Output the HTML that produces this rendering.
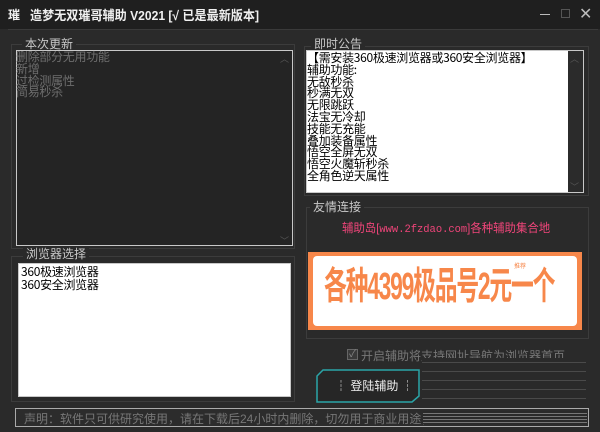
<!DOCTYPE html>
<html><head><meta charset="utf-8"><style>
*{margin:0;padding:0;box-sizing:border-box}
body{width:600px;height:432px;background:#2a2a2a;overflow:hidden;position:relative;font-family:"Liberation Sans","Noto Sans CJK SC",sans-serif;font-size:12px;color:#ddd}
.a{position:absolute}
.grp{position:absolute;border:1px solid #3c3c3c}
.lbl{position:absolute;background:#2a2a2a;padding:0 3px;color:#c8c8c8;font-size:12px;line-height:14px}
.box{position:absolute;border:1px solid #c8c8c8}
.txt{font-family:"Noto Sans CJK SC",sans-serif;font-size:12px;line-height:11.8px;white-space:pre;letter-spacing:-0.3px}
</style></head><body>
<div class="a" style="left:0;top:0;width:600px;height:29px;background:#1f1f1f"></div>
<div class="a" style="left:8px;top:6px;font-size:12px;font-weight:bold;color:#eee">璀</div>
<div class="a" style="left:30px;top:5px;font-size:13px;font-weight:bold;color:#f0f0f0;white-space:nowrap;transform:scaleX(0.93);transform-origin:left">造梦无双璀哥辅助 V2021 [√ 已是最新版本]</div>
<div class="a" style="left:540px;top:14px;width:10px;height:1px;background:#bbb"></div>
<div class="a" style="left:561px;top:9px;width:9px;height:9px;border:1px solid #555"></div>
<div class="a" style="left:579px;top:4px;font-size:16px;color:#bbb">✕</div>
<div class="a" style="left:8px;top:29px;width:590px;height:1px;background:#3a3a3a"></div>

<div class="grp" style="left:11px;top:44px;width:284px;height:205px"></div>
<div class="lbl" style="left:22px;top:37px">本次更新</div>
<div class="box" style="left:16px;top:50px;width:277px;height:196px;background:#242424"></div>
<div class="a txt" style="left:16px;top:51px;color:#6e6e6e">删除部分无用功能
新增
过检测属性
简易秒杀</div>
<div class="a" style="left:280px;top:52px;color:#555;font-size:9px">︿</div>
<div class="a" style="left:280px;top:234px;color:#555;font-size:9px">﹀</div>

<div class="grp" style="left:11px;top:256px;width:284px;height:146px"></div>
<div class="lbl" style="left:23px;top:247px">浏览器选择</div>
<div class="box" style="left:18px;top:263px;width:273px;height:134px;background:#fff"></div>
<div class="a txt" style="left:21px;top:265px;color:#000;line-height:13px">360极速浏览器
360安全浏览器</div>

<div class="box" style="left:15px;top:408px;width:574px;height:19px;border-color:#aaa;background:#2c2c2c"></div>
<div class="a" style="left:24px;top:410px;color:#777;font-size:12px;white-space:nowrap;width:400px;overflow:hidden">声明：软件只可供研究使用，请在下载后24小时内删除，切勿用于商业用途，</div>
<div class="a" style="left:423px;top:411px;width:164px;height:13px;background:repeating-linear-gradient(#2a2a2a 0 2px,#777 2px 3px)"></div>

<div class="grp" style="left:304px;top:46px;width:285px;height:150px"></div>
<div class="lbl" style="left:311px;top:37px">即时公告</div>
<div class="box" style="left:306px;top:50px;width:278px;height:143px;background:#fff"></div>
<div class="a" style="left:568px;top:51px;width:15px;height:141px;background:#2b2b2b"></div>
<div class="a" style="left:570px;top:52px;color:#555;font-size:9px">︿</div>
<div class="a" style="left:570px;top:180px;color:#555;font-size:9px">﹀</div>
<div class="a txt" style="left:307px;top:52px;color:#000">【需安装360极速浏览器或360安全浏览器】
辅助功能:
无敌秒杀
秒满无双
无限跳跃
法宝无冷却
技能无充能
叠加装备属性
悟空全屏无双
悟空火魔斩秒杀
全角色逆天属性</div>

<div class="grp" style="left:306px;top:207px;width:283px;height:132px"></div>
<div class="lbl" style="left:310px;top:200px">友情连接</div>
<div class="a" style="left:342px;top:219px;color:#f0457a;font-size:12px;white-space:nowrap;transform:scaleX(0.95);transform-origin:left">辅助岛[<span style="font-family:'Liberation Mono';font-size:11px">www.2fzdao.com</span>]各种辅助集合地</div>
<div class="a" style="left:308px;top:252px;width:274px;height:78px;background:#f7874a"></div>
<div class="a" style="left:313px;top:256px;width:264px;height:70px;background:#fff;border-radius:4px"></div>
<div class="a" style="left:324px;top:261px;font-size:38px;font-weight:bold;color:#f7874a;white-space:nowrap;letter-spacing:-2px;transform:scaleX(0.6);transform-origin:left;line-height:52px">各种4399极品号2元一个</div>
<div class="a" style="left:514px;top:261px;font-size:6px;color:#f7874a">推荐</div>

<div class="a" style="left:347px;top:349px;width:11px;height:11px;border:1px solid #666;background:#3a3a3a;color:#888;font-size:10px;line-height:9px;text-align:center">✓</div>
<div class="a" style="left:361px;top:347px;color:#777;font-size:12px;white-space:nowrap">开启辅助将支持网址导航为浏览器首页</div>
<div class="a" style="left:422px;top:358px;width:164px;height:46px;background:repeating-linear-gradient(#2a2a2a 0 4px,#4a4a4a 4px 5px,#2a2a2a 5px 9px)"></div>
<svg class="a" style="left:316px;top:369px" width="104" height="35"><polygon points="7,1 103,1 103,27 96,33 1,33 1,7" fill="#262626" stroke="#2aa5a8" stroke-width="1.5"/></svg>
<div class="a" style="left:335px;top:377px;color:#eee;font-size:12px;white-space:nowrap">┆ 登陆辅助 ┆</div>
</body></html>
